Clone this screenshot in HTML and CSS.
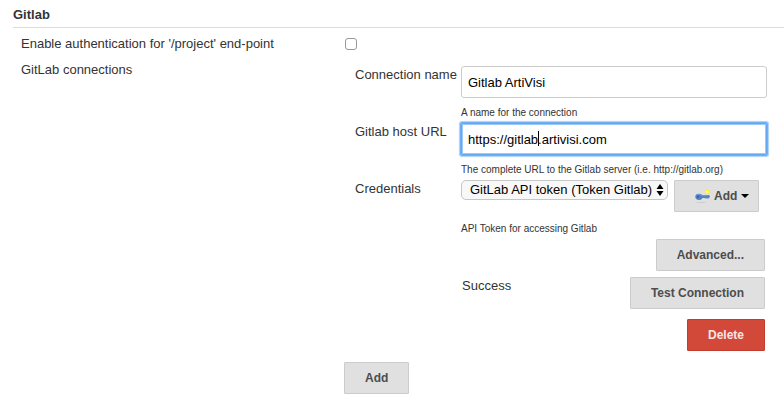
FILE: index.html
```html
<!DOCTYPE html>
<html lang="en">
<head>
<meta charset="utf-8">
<title>Gitlab</title>
<link rel="stylesheet" href="styles.css">
</head>
<body>
<form class="section">
  <h1 class="section-title">Gitlab</h1>
  <div class="setting">
    <label for="auth">Enable authentication for '/project' end-point</label>
    <div class="setting-value"><input class="checkbox" type="checkbox" id="auth"></div>
  </div>
  <div class="setting">
    <div>GitLab connections</div>
    <div class="setting-value">
      <div class="connection">
        <div class="field">
          <label for="name">Connection name</label>
          <div>
            <input class="text-input" type="text" id="name" value="Gitlab ArtiVisi">
            <p class="help">A name for the connection</p>
          </div>
        </div>
        <div class="field">
          <label for="url">Gitlab host URL</label>
          <div>
            <div class="active-input">
              <input class="text-input focused" type="text" id="url" value="https://gitlab.artivisi.com">
              <span class="caret"></span>
            </div>
            <p class="help">The complete URL to the Gitlab server (i.e. http://gitlab.org)</p>
          </div>
        </div>
        <div class="field">
          <label for="credentials">Credentials</label>
          <div>
            <div class="credentials">
              <div class="select-wrap">
                <select class="select" id="credentials"><option>GitLab API token (Token Gitlab)</option></select>
                <svg class="select-arrows" viewBox="0 0 8 12" aria-hidden="true"><path d="M4 0 7.5 5h-7zM4 12 .5 7h7z"/></svg>
              </div>
              <button class="button add-credentials" type="button">
                <svg class="key" viewBox="0 0 16 16" aria-hidden="true">
                  <ellipse cx="7" cy="14.500" rx="5" ry=".6" fill="#cbcbcb"/>
                  <path d="M8 7h7l1 1.500-1 1.500-1 .8-1-.8-1 .8-1-.8H8z" fill="#4c82c5"/>
                  <ellipse cx="5" cy="8.800" rx="3.700" ry="3.100" fill="#4c82c5"/>
                  <path d="M3 7c1.500-1 3.500-.8 5 .8h6" fill="none" stroke="#79a3da" stroke-width=".8"/>
                  <circle cx="4" cy="8.800" r="1" fill="#2b5799"/>
                  <circle cx="13" cy="4" r="2.400" fill="#fdf03a"/>
                  <circle cx="13" cy="4" r="1" fill="#fffdc4"/>
                </svg>
                Add
                <svg class="menu-arrow" viewBox="0 0 8 4" aria-hidden="true"><path d="M0 0h8L4 4z"/></svg>
              </button>
            </div>
            <p class="help help-spaced">API Token for accessing Gitlab</p>
          </div>
        </div>
        <div class="actions"><button class="button" type="button">Advanced...</button></div>
        <div class="actions test">
          <output class="status">Success</output>
          <button class="button" type="button">Test Connection</button>
        </div>
        <div class="actions delete"><button class="button danger" type="button">Delete</button></div>
      </div>
      <button class="button" type="button">Add</button>
    </div>
  </div>
</form>
</body>
</html>
```
FILE: styles.css
```css
* {
  box-sizing: border-box;
}

body {
  margin: 0;
  background: #fff;
  color: #333;
  font: 13px/16px "Liberation Sans", Arial, sans-serif;
}

.section {
  padding: 7px 0 8px 13px;
}

.section-title {
  margin: 0 0 8px;
  padding-bottom: 4px;
  border-bottom: 1px solid #ddd;
  font-size: 13px;
  line-height: 16px;
}

.setting {
  display: grid;
  grid-template-columns: 323px 1fr;
  margin: 0 17px 10px 8px;
}

.checkbox {
  appearance: none;
  display: block;
  width: 12px;
  height: 12px;
  margin: 2px 1px;
  border: 1px solid #999;
  border-radius: 3px;
  background: #fff;
}

.connection {
  margin-left: 11px;
  padding: 4px 0 11px;
}

.field {
  display: grid;
  grid-template-columns: 106px 1fr;
  margin-bottom: 4px;
}

.field > label {
  padding-top: 1px;
  white-space: nowrap;
}

.text-input {
  display: block;
  width: 100%;
  height: 32px;
  padding: 0 6px;
  border: 1px solid #ccc;
  border-radius: 3px;
  background: #fff;
  color: #000;
  font: inherit;
}

.focused {
  border-color: #66a6ee;
  border-radius: 1px;
  outline: 1px solid #72b0f5;
  box-shadow: 0 0 1px 2px #a9d0fa, inset 0 0 0 1px #9ccafa;
}

.active-input {
  position: relative;
}

.caret {
  position: absolute;
  top: 8px;
  left: 77px;
  width: 1px;
  height: 15px;
  background: #000;
}

.help {
  margin: 9px 0 0;
  font-size: 10px;
  line-height: 12px;
}

.help-spaced {
  margin-top: 11px;
}

.credentials {
  display: flex;
  align-items: flex-start;
  gap: 6px;
}

.select-wrap {
  position: relative;
}

.select {
  appearance: none;
  display: block;
  width: 207px;
  height: 20px;
  padding: 0 12px 0 8px;
  border: 1px solid #c6c6c6;
  border-radius: 5px;
  background: #f8f8f8;
  color: #000;
  font: inherit;
}

.select-arrows {
  position: absolute;
  top: 4px;
  right: 4px;
  width: 8px;
  height: 12px;
  pointer-events: none;
}

.button {
  height: 32px;
  padding: 0 20px;
  border: 1px solid #ccc;
  border-radius: 1px;
  background: #e0e0e0;
  color: #4d4d4d;
  font: bold 12px/16px "Liberation Sans", Arial, sans-serif;
}

.add-credentials {
  display: flex;
  align-items: center;
  gap: 4px;
  padding: 0 9px 0 19px;
}

.key {
  width: 16px;
  height: 16px;
}

.menu-arrow {
  width: 8px;
  height: 4px;
  fill: #000;
}

.actions {
  display: flex;
  justify-content: flex-end;
  margin-right: 2px;
}

.test {
  justify-content: space-between;
  margin-top: 6px;
  margin-left: 107px;
}

.status {
  padding-top: 1px;
}

.delete {
  margin-top: 10px;
}

.danger {
  border-color: #c33c2e;
  background: #d24939;
  color: #f5e6e4;
}
```
